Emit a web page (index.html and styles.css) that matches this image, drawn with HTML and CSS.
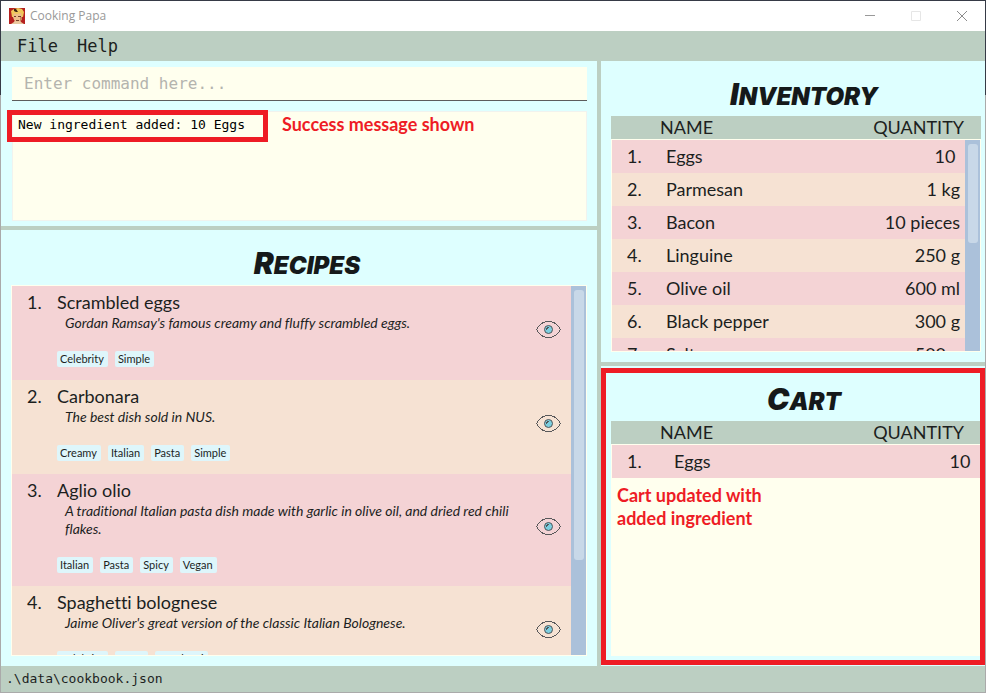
FILE: index.html
```html
<!DOCTYPE html>
<html lang="en">
<head>
<meta charset="utf-8">
<title>Cooking Papa</title>
<link rel="stylesheet" href="styles.css">
</head>
<body>
<svg class="defs" aria-hidden="true">
  <symbol id="eye" viewBox="0 0 25 17">
    <path d="M.5 8.500C3 3.500 7 .5 12.500 .5S22 3.500 24.500 8.500C22 13.500 18 16.500 12.500 16.500S3 13.500 .5 8.500Z" fill="none" stroke="#58585a" shape-rendering="crispEdges"/>
    <circle cx="12.500" cy="8.500" r="4" fill="#7ccfe0" stroke="#505458"/>
    <path d="M10.500 8.500V7.500H11.500V6.500H12.500" fill="none" stroke="#505458" shape-rendering="crispEdges"/>
  </symbol>
</svg>
<div class="window">
  <header class="titlebar">
    <svg class="app-icon" viewBox="0 0 16 16" aria-hidden="true">
      <rect width="16" height="16" fill="#b5201f"/>
      <path d="M2 16L5 14L6 12H11L12 14L15 16Z" fill="#e9c9a0"/>
      <path d="M4 5H13V10L11 13L8 14L5 12L4 9Z" fill="#edbd8b"/>
      <path d="M2 3L5 1L9 0L13 1L15 4L14 9H13L12 5L8 6L5 5L4 9H3Z" fill="#efc85a"/>
      <path d="M5 1H7L9 4H7L5 3Z" fill="#3b2414"/>
      <path d="M5 8H7V9H5ZM9 8H12V9H9ZM7 12H10V13H7Z" fill="#71402a"/>
      <path d="M11 9H13V12L11 13Z" fill="#c98a5c"/>
    </svg>
    <span class="app-name">Cooking Papa</span>
    <button class="win-btn" aria-label="Minimize"><svg viewBox="0 0 12 12"><path d="M1 5.500H11" stroke="#999"/></svg></button>
    <button class="win-btn" aria-label="Maximize" disabled><svg viewBox="0 0 12 12"><path d="M1.500 1.500H10.500V10.500H1.500Z" stroke="#e6e6e6"/></svg></button>
    <button class="win-btn" aria-label="Close"><svg viewBox="0 0 12 12"><path d="M1 1L11 11M11 1L1 11" stroke="#8c8c8c"/></svg></button>
  </header>
  <nav class="menubar">
    <button>File</button>
    <button>Help</button>
  </nav>
  <main class="main">
    <div class="column column-left">
      <section class="panel command">
        <input class="command-input" type="text" placeholder="Enter command here..." aria-label="Command">
        <div class="result">
          <textarea class="result-text" readonly aria-label="Result">New ingredient added: 10 Eggs</textarea>
          <div class="result-frame"></div>
          <p class="note result-note">Success message shown</p>
        </div>
      </section>
      <section class="panel listing">
        <h2>Recipes</h2>
        <div class="list">
          <ol class="recipes">
            <li>
              <span class="index">1.</span>
              <div class="recipe"><h3>Scrambled eggs</h3><p>Gordan Ramsay's famous creamy and fluffy scrambled eggs.</p>
                <div class="tags"><span>Celebrity</span><span>Simple</span></div></div>
              <button class="view" aria-label="View Scrambled eggs"><svg><use href="#eye"/></svg></button>
            </li>
            <li>
              <span class="index">2.</span>
              <div class="recipe"><h3>Carbonara</h3><p>The best dish sold in NUS.</p>
                <div class="tags"><span>Creamy</span><span>Italian</span><span>Pasta</span><span>Simple</span></div></div>
              <button class="view" aria-label="View Carbonara"><svg><use href="#eye"/></svg></button>
            </li>
            <li>
              <span class="index">3.</span>
              <div class="recipe"><h3>Aglio olio</h3><p>A traditional Italian pasta dish made with garlic in olive oil, and dried red chili flakes.</p>
                <div class="tags"><span>Italian</span><span>Pasta</span><span>Spicy</span><span>Vegan</span></div></div>
              <button class="view" aria-label="View Aglio olio"><svg><use href="#eye"/></svg></button>
            </li>
            <li>
              <span class="index">4.</span>
              <div class="recipe"><h3>Spaghetti bolognese</h3><p>Jaime Oliver's great version of the classic Italian Bolognese.</p>
                <div class="tags"><span>Celebrity</span><span>Pasta</span><span>Spaghetti</span></div></div>
              <button class="view" aria-label="View Spaghetti bolognese"><svg><use href="#eye"/></svg></button>
            </li>
          </ol>
          <div class="scrollbar"><div class="thumb thumb-recipes"></div></div>
        </div>
      </section>
    </div>
    <div class="column column-right">
      <section class="panel listing">
        <h2>Inventory</h2>
        <table class="items">
          <thead><tr><th>NAME</th><th>QUANTITY</th></tr></thead>
          <tbody class="scrolling">
            <tr><td>1.</td><td>Eggs</td><td>10 </td></tr>
            <tr><td>2.</td><td>Parmesan</td><td>1 kg</td></tr>
            <tr><td>3.</td><td>Bacon</td><td>10 pieces</td></tr>
            <tr><td>4.</td><td>Linguine</td><td>250 g</td></tr>
            <tr><td>5.</td><td>Olive oil</td><td>600 ml</td></tr>
            <tr><td>6.</td><td>Black pepper</td><td>300 g</td></tr>
            <tr><td>7.</td><td>Salt</td><td>500 g</td></tr>
          </tbody>
        </table>
        <div class="scrollbar scrollbar-over"><div class="thumb thumb-items"></div></div>
      </section>
      <section class="panel listing cart">
        <h2>Cart</h2>
        <table class="items">
          <thead><tr><th>NAME</th><th>QUANTITY</th></tr></thead>
          <tbody>
            <tr><td>1.</td><td>Eggs</td><td>10 </td></tr>
          </tbody>
        </table>
        <p class="note cart-note">Cart updated with<br>added ingredient</p>
        <div class="cart-frame"></div>
      </section>
    </div>
  </main>
  <footer class="statusbar">.\data\cookbook.json</footer>
</div>
</body>
</html>
```
FILE: styles.css
```css
:root {
  --sage: #bccfc2;
  --ice: #deffff;
  --cream: #ffffee;
  --pink: #f4d3d5;
  --peach: #f6e2d3;
  --red: #ee1c25;
  --mono: "DejaVu Sans Mono", "Liberation Mono", monospace;
}

* { box-sizing: border-box; }

body {
  margin: 0;
  height: 100vh;
  padding: 1px;
  overflow: hidden;
  background: linear-gradient(#363a46 95px, #aaa 95px);
  color: #1c1f1e;
  font-family: Lato, sans-serif;
  font-size: 18px;
  line-height: 22px;
  font-variant-ligatures: none;
}

h2, h3, p, ol { margin: 0; padding: 0; }

button {
  border: 0;
  padding: 0;
  background: none;
  color: inherit;
  font: inherit;
}

.defs { position: absolute; width: 0; height: 0; }

.window {
  display: flex;
  flex-direction: column;
  height: 100%;
  background: var(--sage);
}

.titlebar {
  display: flex;
  align-items: center;
  height: 30px;
  padding-left: 8px;
  background: #fff;
}
.app-icon { width: 16px; height: 16px; }
.app-name {
  flex: 1;
  margin-left: 5px;
  color: #999;
  font: 12px/16px "Open Sans", sans-serif;
}
.win-btn {
  display: flex;
  align-items: center;
  justify-content: center;
  width: 46px;
  height: 30px;
}
.win-btn svg { width: 12px; height: 12px; fill: none; }

.menubar {
  display: flex;
  align-items: center;
  gap: 19px;
  height: 30px;
  padding-left: 16px;
  font: 17px/22px var(--mono);
}

.main {
  flex: 1;
  min-height: 0;
  display: grid;
  grid-template-columns: 149fr 96fr;
  gap: 4px;
}
.column {
  display: grid;
  gap: 4px;
  min-width: 0;
  min-height: 0;
}
.column-left { grid-template-rows: 165px minmax(0, 1fr); }
.column-right { grid-template-rows: minmax(0, 301fr) minmax(0, 300fr); }

.panel {
  position: relative;
  display: flex;
  flex-direction: column;
  min-height: 0;
  background: var(--ice);
}

.command { padding: 6px 10px 5px 11px; gap: 10px; }
.command-input {
  width: 100%;
  height: 34px;
  padding: 0 12px;
  border: 0;
  border-bottom: 1px solid #5c5c5c;
  background: var(--cream);
  font: 16px/22px var(--mono);
}
.command-input::placeholder { color: #b4b4ae; opacity: 1; }
.result { position: relative; flex: 1; display: flex; }
.result-text {
  flex: 1;
  padding: 4px 5px;
  border: 1px solid #f1f3ee;
  background: var(--cream);
  color: #000;
  font: 13px/18px var(--mono);
  resize: none;
}
.result-frame {
  position: absolute;
  left: -5px;
  top: -1px;
  width: 261px;
  height: 32px;
  border: 5px solid var(--red);
}
.note {
  position: absolute;
  color: var(--red);
  font-weight: bold;
  line-height: 23px;
}
.result-note { left: 270px; top: 2px; }

.listing { padding: 0 4px 10px 10px; }
.column-left .listing { padding-right: 10px; }
.listing h2 {
  padding: 13px 0 0 16px;
  height: 55px;
  color: #15191a;
  text-align: center;
  text-transform: uppercase;
  font: italic 900 24px/40px Inter, sans-serif;
}
.listing h2::first-letter { font-size: 30px; line-height: 40px; }

.list {
  flex: 1;
  min-height: 0;
  display: flex;
  border: 1px solid var(--cream);
  overflow: hidden;
}
.recipes { flex: 1; list-style: none; }
.recipes li {
  display: flex;
  padding: 5px 0 13px 15px;
  background: var(--pink);
}
.recipes li:nth-child(even) { background: var(--peach); }
.index { width: 30px; }
.recipe { flex: 1; }
.recipe h3 {
  margin-bottom: 1px;
  font-size: 18px;
  font-weight: normal;
}
.recipe p {
  padding-left: 8px;
  font-size: 14px;
  line-height: 18px;
  font-style: italic;
}
.tags { display: flex; gap: 7px; margin-top: 19px; }
.tags span {
  padding: 0 4px 0 3px;
  border-radius: 2px;
  background: #def6fb;
  font-size: 11px;
  line-height: 16px;
}
.view { width: 45px; }
.view svg { display: block; width: 25px; height: 17px; margin: 0 10px; }

.scrollbar { width: 15px; padding: 4px 2px 0 3px; background: #abc1da; }
.thumb { border-radius: 3px; background: #c8d8e8; }
.thumb-recipes { height: 270px; }
.thumb-items { height: 99px; }
.scrollbar-over { position: absolute; right: 5px; top: 79px; bottom: 11px; }

.items { flex: 1; min-height: 0; display: flex; flex-direction: column; }
.items thead { display: block; background: var(--sage); }
.items tr { display: flex; }
.items th {
  padding: 0 17px 0 49px;
  font-weight: normal;
  line-height: 23px;
}
.items th:last-child { margin-left: auto; padding-left: 0; }
.items tbody {
  flex: 1;
  min-height: 0;
  display: block;
  border: 1px solid var(--cream);
  background: var(--cream);
  overflow: hidden;
}
.items tbody.scrolling { padding-right: 15px; }
.items tbody tr {
  padding: 0 5px 0 15px;
  background: var(--pink);
}
.items tbody tr:nth-child(even) { background: var(--peach); }
.items td { padding: 0; line-height: 33px; white-space: pre; }
.items td:first-child { width: 39px; }
.items td:last-child { margin-left: auto; }

.cart .items td:first-child { width: 47px; }
.cart-note { left: 16px; top: 118px; }
.cart-frame {
  position: absolute;
  inset: 2px 0 1px;
  border: 5px solid var(--red);
}

.statusbar {
  height: 26px;
  padding-left: 5px;
  font: 13px/26px var(--mono);
}
```
